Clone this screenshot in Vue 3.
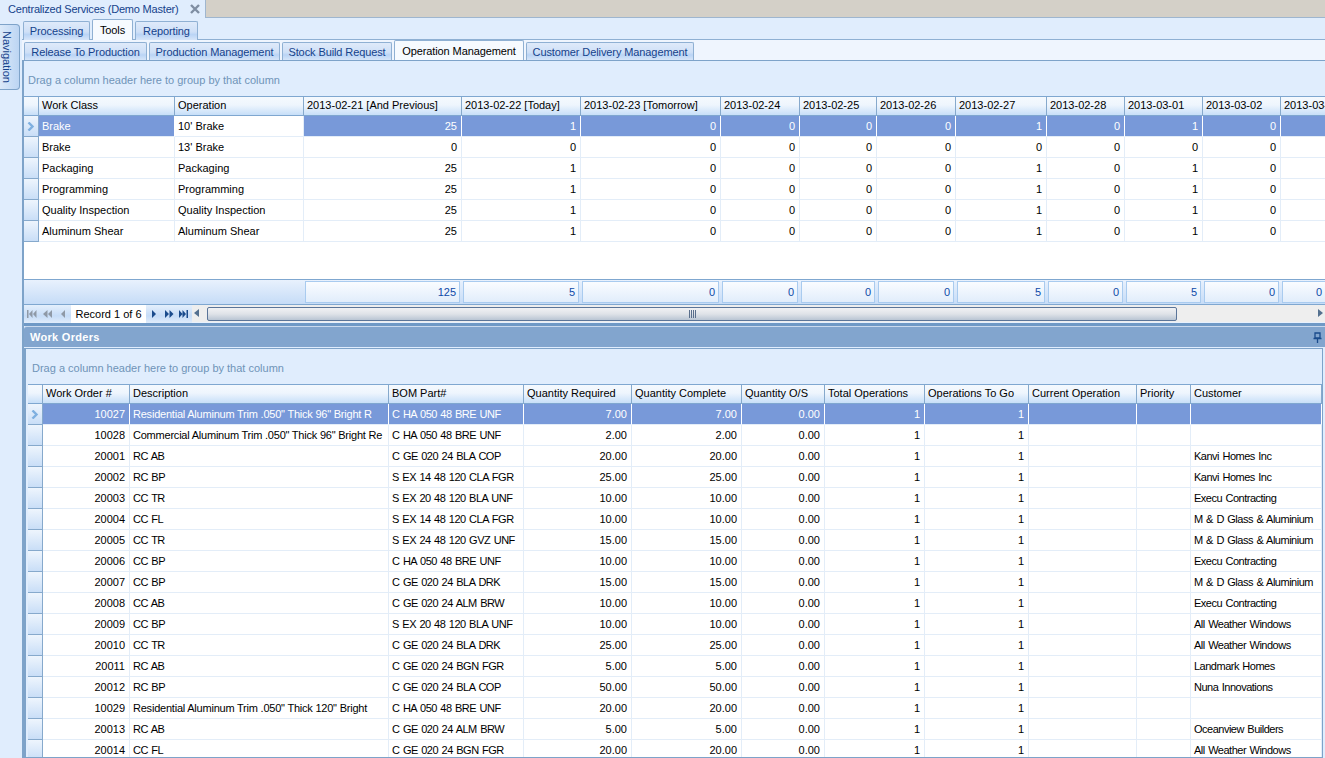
<script setup>
const mainTabs = [
  { t: 'Processing', w: 67 },
  { t: 'Tools', w: 41, active: true },
  { t: 'Reporting', w: 63 }
]
const subTabs = [
  { t: 'Release To Production', w: 123 },
  { t: 'Production Management', w: 131 },
  { t: 'Stock Build Request', w: 110 },
  { t: 'Operation Management', w: 130, active: true },
  { t: 'Customer Delivery Management', w: 168 }
]
const topCols = [
  { t: 'Work Class', w: 136 }, { t: 'Operation', w: 129 },
  { t: '2013-02-21 [And Previous]', w: 158, r: 1 }, { t: '2013-02-22 [Today]', w: 119, r: 1 },
  { t: '2013-02-23 [Tomorrow]', w: 140, r: 1 }, { t: '2013-02-24', w: 79, r: 1 },
  { t: '2013-02-25', w: 77, r: 1 }, { t: '2013-02-26', w: 79, r: 1 },
  { t: '2013-02-27', w: 91, r: 1 }, { t: '2013-02-28', w: 78, r: 1 },
  { t: '2013-03-01', w: 78, r: 1 }, { t: '2013-03-02', w: 78, r: 1 }, { t: '2013-03-03', w: 78, r: 1 }
]
const topRows = [
  ['Brake', "10' Brake", 25, 1, 0, 0, 0, 0, 1, 0, 1, 0, ''],
  ['Brake', "13' Brake", 0, 0, 0, 0, 0, 0, 0, 0, 0, 0, ''],
  ['Packaging', 'Packaging', 25, 1, 0, 0, 0, 0, 1, 0, 1, 0, ''],
  ['Programming', 'Programming', 25, 1, 0, 0, 0, 0, 1, 0, 1, 0, ''],
  ['Quality Inspection', 'Quality Inspection', 25, 1, 0, 0, 0, 0, 1, 0, 1, 0, ''],
  ['Aluminum Shear', 'Aluminum Shear', 25, 1, 0, 0, 0, 0, 1, 0, 1, 0, '']
]
const totals = [125, 5, 0, 0, 0, 0, 5, 0, 5, 0, 0]
const topTemplate = '15px ' + topCols.map(c => c.w + 'px').join(' ')
const footerCells = totals.map((v, i) => ({ v, w: i === totals.length - 1 ? 47 : topCols[i + 2].w }))

const woCols = [
  { t: 'Work Order #', w: 87, r: 1 }, { t: 'Description', w: 259 }, { t: 'BOM Part#', w: 135 },
  { t: 'Quantity Required', w: 108, r: 1 }, { t: 'Quantity Complete', w: 110, r: 1 },
  { t: 'Quantity O/S', w: 83, r: 1 }, { t: 'Total Operations', w: 100, r: 1 },
  { t: 'Operations To Go', w: 104, r: 1 }, { t: 'Current Operation', w: 108 },
  { t: 'Priority', w: 54 }, { t: 'Customer', w: 131 }
]
const woTemplate = '15px ' + woCols.map(c => c.w + 'px').join(' ')
const wo = [
  ['10027', 'Residential Aluminum Trim .050" Thick 96" Bright R', 'C HA 050 48 BRE UNF', '7.00', ''],
  ['10028', 'Commercial Aluminum Trim .050" Thick 96" Bright Re', 'C HA 050 48 BRE UNF', '2.00', ''],
  ['20001', 'RC AB', 'C GE 020 24 BLA COP', '20.00', 'Kanvi Homes Inc'],
  ['20002', 'RC BP', 'S EX 14 48 120 CLA FGR', '25.00', 'Kanvi Homes Inc'],
  ['20003', 'CC TR', 'S EX 20 48 120 BLA UNF', '10.00', 'Execu Contracting'],
  ['20004', 'CC FL', 'S EX 14 48 120 CLA FGR', '10.00', 'M & D Glass & Aluminium'],
  ['20005', 'CC TR', 'S EX 24 48 120 GVZ UNF', '15.00', 'M & D Glass & Aluminium'],
  ['20006', 'CC BP', 'C HA 050 48 BRE UNF', '10.00', 'Execu Contracting'],
  ['20007', 'CC BP', 'C GE 020 24 BLA DRK', '15.00', 'M & D Glass & Aluminium'],
  ['20008', 'CC AB', 'C GE 020 24 ALM BRW', '10.00', 'Execu Contracting'],
  ['20009', 'CC BP', 'S EX 20 48 120 BLA UNF', '10.00', 'All Weather Windows'],
  ['20010', 'CC TR', 'C GE 020 24 BLA DRK', '25.00', 'All Weather Windows'],
  ['20011', 'RC AB', 'C GE 020 24 BGN FGR', '5.00', 'Landmark Homes'],
  ['20012', 'RC BP', 'C GE 020 24 BLA COP', '50.00', 'Nuna Innovations'],
  ['10029', 'Residential Aluminum Trim .050" Thick 120" Bright', 'C HA 050 48 BRE UNF', '20.00', ''],
  ['20013', 'RC AB', 'C GE 020 24 ALM BRW', '5.00', 'Oceanview Builders'],
  ['20014', 'CC FL', 'C GE 020 24 BGN FGR', '20.00', 'All Weather Windows']
]
const woRows = wo.map(r => [r[0], r[1], r[2], r[3], r[3], '0.00', '1', '1', '', '', r[4]])
const isShort = v => v.length <= 5
</script>

<template>
  <div class="app">
    <div class="titlebar">
      <div class="doc-tab">
        <span class="doc-title">Centralized Services (Demo Master)</span>
        <svg class="close" width="10" height="10" viewBox="0 0 10 10"><path d="M1 1 L9 9 M9 1 L1 9" stroke="#7f8ea3" stroke-width="2.4" fill="none"/></svg>
      </div>
      <div class="doc-rest"></div>
    </div>
    <div class="body">
      <div class="rail"><div class="nav-tab"><span>Navigation</span></div></div>
      <div class="main">
        <div class="tabs main-tabs">
          <div v-for="t in mainTabs" :key="t.t" class="tab" :class="{ active: t.active }" :style="{ width: t.w + 'px' }">{{ t.t }}</div>
        </div>
        <div class="tabs sub-tabs">
          <div v-for="t in subTabs" :key="t.t" class="tab sub" :class="{ active: t.active }" :style="{ width: t.w + 'px' }">{{ t.t }}</div>
        </div>
        <div class="top-panel">
          <div class="group-hint top-hint">Drag a column header here to group by that column</div>
          <div class="grid-head" :style="{ gridTemplateColumns: topTemplate }">
            <div class="hcell ind"></div>
            <div v-for="c in topCols" :key="c.t" class="hcell">{{ c.t }}</div>
          </div>
          <div class="top-rows">
            <div v-for="(r, i) in topRows" :key="i" class="row" :class="{ sel: i === 0 }" :style="{ gridTemplateColumns: topTemplate }">
              <div class="ind-cell">
                <svg v-if="i === 0" width="8" height="9" viewBox="0 0 8 9"><path d="M1.5 0.5 L5.5 4.5 L1.5 8.5" fill="none" stroke="#7fb0e0" stroke-width="2.4"/></svg>
              </div>
              <div v-for="(v, j) in r" :key="j" class="cell" :class="{ num: j > 1, focus: i === 0 && j === 1 }">{{ v }}</div>
            </div>
          </div>
          <div class="footer">
            <div class="foot-lead"></div>
            <div v-for="(c, i) in footerCells" :key="i" class="foot-cell" :style="{ width: c.w + 'px' }"><div class="foot-box">{{ c.v }}</div></div>
          </div>
          <div class="navbar">
            <div class="nav-btns">
              <svg width="47" height="18" viewBox="0 0 47 18" fill="#8f99a6">
                <path d="M3 5h1.5v8H3zM8.5 5v8L5 9zM12.5 5v8L9 9z"/>
                <path d="M23.5 5v8L19 9zM28 5v8l-4-4z"/>
                <path d="M41 5v8l-4-4z"/>
              </svg>
            </div>
            <div class="record">Record 1 of 6</div>
            <div class="nav-btns next">
              <svg width="46" height="18" viewBox="0 0 46 18" fill="#1a4b8c">
                <path d="M6 5v8l4-4z"/>
                <path d="M19 5v8l4-4zM23.5 5v8l4-4z"/>
                <path d="M33 5v8l3.5-4zM36.5 5v8l3.5-4zM40.5 5H42v8h-1.5z"/>
              </svg>
            </div>
            <div class="scroll">
              <svg class="arrow" width="9" height="17" viewBox="0 0 9 17"><path d="M7 4v8L2 8z" fill="#54708f"/></svg>
              <div class="thumb"><span class="grip"></span></div>
              <svg class="arrow" width="9" height="17" viewBox="0 0 9 17"><path d="M2 4v8l5-4z" fill="#54708f"/></svg>
            </div>
          </div>
        </div>
        <div class="splitter"></div>
        <div class="wo-panel">
          <div class="wo-head">
            <span>Work Orders</span>
            <svg width="9" height="11" viewBox="0 0 9 11"><path d="M2 1h5v5H2zM0.5 6.5h8M4.5 7v4" fill="none" stroke="#1a4b8c" stroke-width="1.3"/></svg>
          </div>
          <div class="wo-body">
            <div class="group-hint wo-hint">Drag a column header here to group by that column</div>
            <div class="grid-head" :style="{ gridTemplateColumns: woTemplate }">
              <div class="hcell ind"></div>
              <div v-for="c in woCols" :key="c.t" class="hcell">{{ c.t }}</div>
            </div>
            <div v-for="(r, i) in woRows" :key="i" class="row" :class="{ sel: i === 0 }" :style="{ gridTemplateColumns: woTemplate }">
              <div class="ind-cell">
                <svg v-if="i === 0" width="8" height="9" viewBox="0 0 8 9"><path d="M1.5 0.5 L5.5 4.5 L1.5 8.5" fill="none" stroke="#7fb0e0" stroke-width="2.4"/></svg>
              </div>
              <div v-for="(v, j) in r" :key="j" class="cell" :class="{ num: woCols[j].r, desc: j === 1 && !isShort(v), tight: !woCols[j].r && (j !== 1 || isShort(v)) }">{{ v }}</div>
            </div>
          </div>
        </div>
      </div>
    </div>
  </div>
</template>

<style scoped>
.app {
  width: 1325px;
  height: 758px;
  overflow: hidden;
  background: #e0edfd;
  font-family: "Liberation Sans", "Noto Sans", sans-serif;
  font-size: 11px;
  color: #000;
  display: flex;
  flex-direction: column;
}
.titlebar { display: flex; height: 18px; flex: none; }
.doc-tab {
  width: 205px;
  flex: none;
  display: flex;
  align-items: center;
  justify-content: space-between;
  padding: 0 5px 0 8px;
  box-sizing: border-box;
  color: #15428b;
  white-space: nowrap;
}
.doc-title { letter-spacing: -0.2px; }
.close { flex: none; }
.doc-rest { flex: 1; background: #d4d0c8; border-left: 1px solid #9fb6cf; border-bottom: 1px solid #9fb6cf; }
.body { display: flex; flex: 1; min-height: 0; }
.rail { width: 22px; flex: none; padding-top: 6px; box-sizing: border-box; }
.nav-tab {
  width: 20px;
  height: 66px;
  box-sizing: border-box;
  border: 1px solid #7ea3c9;
  border-left: none;
  border-radius: 0 4px 4px 0;
  background: linear-gradient(90deg, #dbe9f9, #bcd5f3);
  color: #15428b;
  display: flex;
  justify-content: flex-start;
  padding-top: 6px;
}
.nav-tab span { writing-mode: vertical-rl; line-height: 14px; }
.main { flex: 1; min-width: 0; display: flex; flex-direction: column; }
.tabs { display: flex; flex: none; gap: 2px; padding-left: 1px; }
.main-tabs { height: 22px; padding-top: 3px; box-sizing: border-box; position: relative; z-index: 1; margin-bottom: -1px; }
.sub-tabs {
  height: 22px;
  padding-top: 2px;
  box-sizing: border-box;
  background: #eff5fe;
  border-top: 1px solid #8fb0d3;
  border-bottom: 1px solid #7ea3c9;
  padding-left: 2px;
}
.tab {
  box-sizing: border-box;
  border: 1px solid #8fb0d3;
  border-bottom: none;
  border-radius: 2px 2px 0 0;
  background: linear-gradient(#dfeafa, #cfe0f7 55%, #bad4f5 70%, #d6e5f9);
  color: #15428b;
  text-align: center;
  line-height: 19px;
  letter-spacing: -0.1px;
  white-space: nowrap;
  overflow: hidden;
}
.tab.active { background: #f6faff; color: #000; margin-top: -2px; padding-top: 1px; }
.top-panel { flex: none; border-left: 2px solid #7ea3c9; display: flex; flex-direction: column; }
.group-hint { color: #6f94b8; flex: none; }
.top-hint { height: 35px; line-height: 39px; padding-left: 4px; }
.grid-head { display: grid; flex: none; height: 20px; border-top: 1px solid #7fa7d0; box-sizing: border-box; }
.hcell {
  box-sizing: border-box;
  background: linear-gradient(#f5f9fe, #eef5fd 45%, #c7dff8);
  border-right: 1px solid #86a9cc;
  border-bottom: 1px solid #7fa7d0;
  padding-left: 3px;
  line-height: 16px;
  white-space: nowrap;
  overflow: hidden;
}
.hcell.ind { padding: 0; }
.top-rows { height: 163px; background: #fff; flex: none; overflow: hidden; }
.row { display: grid; height: 21px; background: #fff; overflow: hidden; }
.ind-cell {
  box-sizing: border-box;
  background: linear-gradient(#eef5fd, #c9def7);
  border-right: 1px solid #86a9cc;
  border-bottom: 1px solid #86a9cc;
  display: flex;
  align-items: center;
  justify-content: center;
}
.cell {
  box-sizing: border-box;
  padding: 0 4px 0 3px;
  line-height: 20px;
  white-space: nowrap;
  overflow: hidden;
  border-right: 1px solid #e3edf8;
  border-bottom: 1px solid #e3edf8;
}
.cell.num { text-align: right; }
.cell.desc { letter-spacing: -0.22px; }
.cell.tight { letter-spacing: -0.5px; word-spacing: 0.9px; }
.row.sel .cell { background: #7899d9; color: #fff; border-right-color: #fff; border-bottom-color: #e3edf8; }
.row.sel .cell.focus { background: #fff; color: #000; border-right-color: #e3edf8; }
.footer {
  display: flex;
  flex: none;
  height: 26px;
  box-sizing: border-box;
  border-top: 1px solid #7fa7d0;
  border-bottom: 1px solid #7fa7d0;
  background: linear-gradient(#e8f1fd, #c6dcf7);
  overflow: hidden;
}
.foot-lead { width: 279px; flex: none; }
.foot-cell { flex: none; padding: 1px 1px 1px 2px; box-sizing: border-box; }
.foot-box {
  height: 22px;
  box-sizing: border-box;
  border: 1px solid #a9cbef;
  background: linear-gradient(#fafcff, #e1edfb);
  color: #0f4aa8;
  text-align: right;
  padding-right: 3px;
  line-height: 20px;
}
.navbar { display: flex; flex: none; height: 18px; background: #e8f1fd; }
.nav-btns {
  width: 47px;
  flex: none;
  background: linear-gradient(#e4effc, #c6dcf7 60%, #e0ecfb);
}
.nav-btns.next { width: 46px; }
.record { width: 75px; flex: none; background: #fff; text-align: center; line-height: 18px; }
.scroll {
  flex: 1;
  display: flex;
  align-items: center;
  background: #eeeeee;
  height: 17px;
  min-width: 0;
}
.arrow { flex: none; }
.scroll .arrow:first-child { margin-right: 6px; }
.thumb {
  width: 970px;
  height: 14px;
  flex: none;
  box-sizing: border-box;
  border: 1px solid #5b7599;
  border-radius: 2px;
  background: linear-gradient(#f1f2f4, #dfe3e8 50%, #b9c5d3);
  display: flex;
  align-items: center;
  justify-content: center;
}
.grip {
  width: 7px;
  height: 8px;
  background: repeating-linear-gradient(90deg, #5a6f8c 0 1px, transparent 1px 2px);
}
.scroll .arrow:last-child { margin-left: auto; }
.splitter { height: 3px; flex: none; background: #6f99c6; border-left: 2px solid #7ea3c9; }
.wo-panel {
  flex: 1;
  min-height: 0;
  border-left: 2px solid #7ea3c9;
  display: flex;
  flex-direction: column;
}
.wo-head {
  height: 21px;
  flex: none;
  box-sizing: border-box;
  border-top: 1px solid #c9d9ee;
  background: #82a5ce;
  border-radius: 3px 0 0 0;
  color: #fff;
  font-weight: 700;
  letter-spacing: 0.3px;
  display: flex;
  align-items: center;
  justify-content: space-between;
  padding: 0 3px 0 6px;
}
.wo-body {
  flex: 1;
  min-height: 0;
  margin-top: 1px;
  border: 1px solid #7ea3c9;
  border-right: 1px solid #7ea3c9;
  margin-right: 2px;
  border-left-width: 2px;
  padding-left: 2px;
  overflow: hidden;
}
.wo-hint { height: 35px; line-height: 39px; padding-left: 4px; }
</style>

<style>
html, body { margin: 0; padding: 0; overflow: hidden; }
</style>
